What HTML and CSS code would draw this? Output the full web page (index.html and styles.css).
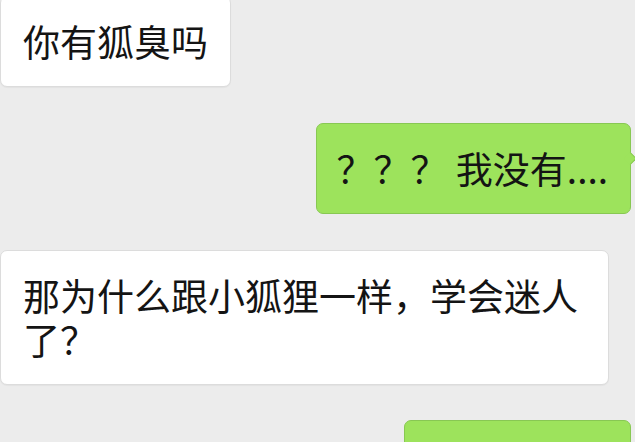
FILE: index.html
```html
<!DOCTYPE html>
<html lang="zh">
<head>
    <meta charset="UTF-8">
    <meta name="viewport" content="width=device-width, initial-scale=1.0">
    <title>聊天记录</title>
    <link rel="stylesheet" href="styles.css">
</head>
<body>

    <div class="chat">
        <div class="bubble left first">你有狐臭吗</div>
        <div class="bubble right">？？？ 我没有....</div>
        <div class="bubble left">那为什么跟小狐狸一样，学会迷人了？</div>
        <div class="bubble right last">&nbsp;</div>
    </div>

</body>
</html>
```

FILE: styles.css
```css
body {
    margin: 0;
    padding: 0;
    overflow: hidden;
    background-color: #ececec;
    font-family: "Noto Sans CJK SC", "Noto Sans", sans-serif;
    color: #141414;
}

.chat {
    display: flex;
    flex-direction: column;
    gap: 36px;
}

.bubble {
    position: relative;
    box-sizing: border-box;
    max-width: 609px;
    padding: 22px 22px 23px;
    font-size: 37px;
    line-height: 44px;
    border-radius: 7px;
}

.left {
    align-self: flex-start;
    background-color: #ffffff;
    border: 1px solid #dcdcdc;
    box-shadow: 0 1px 1px rgba(0, 0, 0, 0.04);
}

.first {
    margin-top: -4px; /* top of the bubble is cut off */
}

.right {
    align-self: flex-end;
    margin-right: 4px;
    padding-left: 20px;
    background-color: #9de35c;
    border: 1px solid #88c853;
}

/* small tail on the green bubble */
.right::after {
    content: "";
    position: absolute;
    top: 30px;
    right: -5px;
    width: 8px;
    height: 8px;
    background-color: #9de35c;
    border-top: 1px solid #88c853;
    border-right: 1px solid #88c853;
    transform: rotate(45deg);
}

.last {
    margin-top: -1px;
    width: 227px;
}
```
